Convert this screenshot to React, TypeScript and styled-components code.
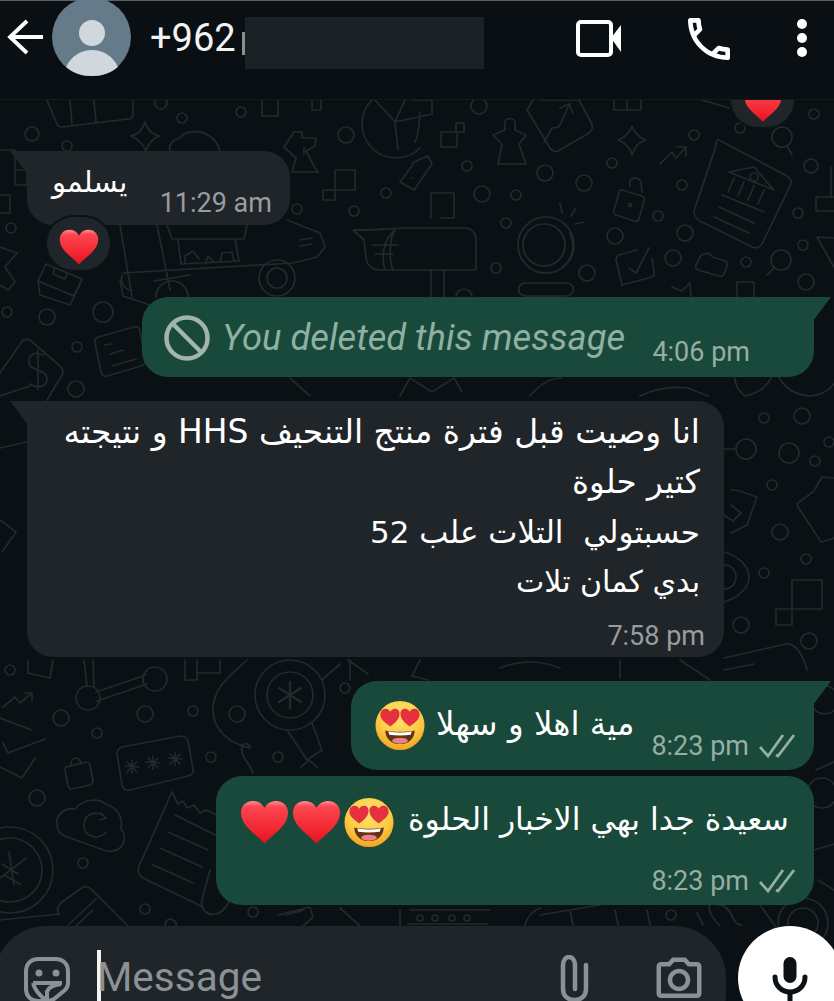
import React from "react";
import styled, { createGlobalStyle } from "styled-components";
import { MdOutlinePhotoCamera } from "react-icons/md";

const Global = createGlobalStyle`
html,body{margin:0;padding:0;background:#0a1013;}
#root{width:834px;height:1001px;overflow:hidden;}
`;

const Screen = styled.div`
position:relative;
width:834px;
height:1001px;
display:flex;
flex-direction:column;
overflow:hidden;
background:#0a1013;
font-family:Roboto,"Liberation Sans",sans-serif;
`;
const Header = styled.header`
position:relative;
z-index:2;
flex:0 0 100px;
box-sizing:border-box;
height:100px;
border-top:1px solid #5c6063;
border-bottom:1px solid #14191c;
background:#0a0f13;
display:flex;
align-items:flex-start;
padding-left:7px;
`;
const BackIcon = styled.svg`
width:37px;
height:36px;
margin-top:18px;
color:#fff;
flex:none;
`;
const Avatar = styled.svg`
width:79px;
height:78px;
margin:-3px 0 0 8px;
flex:none;
`;
const Phone = styled.div`
margin:15px 0 0 19px;
width:86px;
font-size:38px;
line-height:44px;
color:#f2f4f4;
white-space:nowrap;
flex:none;
`;
const Sliver = styled.div`
width:3px;
height:23px;
margin:31px 0 0 6px;
background:#8b8f91;
flex:none;
`;
const Redacted = styled.div`
width:239px;
height:52px;
margin-top:16px;
background:#1b2226;
flex:none;
`;
const HeaderIcon = styled.svg<{ $w: number; $h: number; $ml: number; $mt: number }>`
width:${(p) => p.$w}px;
height:${(p) => p.$h}px;
margin:${(p) => p.$mt}px 0 0 ${(p) => p.$ml}px;
color:#fff;
flex:none;
`;
const Wallpaper = styled.svg`
position:absolute;
left:0;
top:100px;
width:834px;
height:901px;
`;
const Chat = styled.main`
position:relative;
z-index:1;
flex:1;
min-height:0;
display:flex;
flex-direction:column;
`;
const Reaction = styled.div<{ $top: number; $right?: boolean; $h: number }>`
position:relative;
z-index:1;
box-sizing:border-box;
width:63px;
height:${(p) => p.$h}px;
margin-top:${(p) => p.$top}px;
margin-left:${(p) => (p.$right ? "731px" : "47px")};
border-radius:27px;
background:#202529;
box-shadow:0 0 0 2px #0c1215;
display:flex;
justify-content:center;
align-items:flex-end;
padding-bottom:5px;
`;
const Bubble = styled.div<{ $mine?: boolean; $w: number; $h: number; $top: number; $tail?: boolean }>`
position:relative;
box-sizing:border-box;
width:${(p) => p.$w}px;
height:${(p) => p.$h}px;
margin-top:${(p) => p.$top}px;
margin-left:${(p) => (p.$mine ? `${814 - p.$w}px` : "27px")};
border-radius:${(p) => (p.$tail ? (p.$mine ? "26px 0 26px 26px" : "0 26px 26px 26px") : "26px")};
background:${(p) => (p.$mine ? "#18493a" : "#202529")};
${(p) =>
  p.$tail
    ? `&::before{content:"";position:absolute;top:0;${p.$mine ? "right:-17px" : "left:-17px"};width:18px;height:24px;background:inherit;clip-path:polygon(${
        p.$mine ? "0 0,100% 0,0 100%" : "0 0,100% 0,100% 100%"
      });}`
    : ""}
`;
const Row = styled.div<{ $pl: number; $pt: number; $gap: number }>`
display:flex;
align-items:center;
gap:${(p) => p.$gap}px;
padding:${(p) => p.$pt}px 0 0 ${(p) => p.$pl}px;
`;
const EmojiGroup = styled.div`
display:flex;
align-items:center;
gap:3px;
flex:none;
`;
const ArabicLine = styled.div<{ $size: number; $lift?: number }>`
direction:rtl;
white-space:pre;
color:#fff;
font-family:"DejaVu Sans","Noto Sans",sans-serif;
font-size:${(p) => p.$size}px;
line-height:50px;
margin-bottom:${(p) => p.$lift ?? 0}px;
`;
const Lines = styled.div`
padding:6px 24px 0 0;
display:flex;
flex-direction:column;
`;
const Time = styled.span<{ $mine?: boolean }>`
font-size:27px;
line-height:30px;
white-space:nowrap;
color:${(p) => (p.$mine ? "#96aea5" : "#989da0")};
`;
const Meta = styled.div<{ $right: number; $bottom: number }>`
position:absolute;
right:${(p) => p.$right}px;
bottom:${(p) => p.$bottom}px;
display:flex;
align-items:center;
gap:10px;
`;
const Deleted = styled.span`
font-size:36.300px;
line-height:42px;
font-style:italic;
color:#8fb0a3;
white-space:nowrap;
`;
const Composer = styled.footer`
position:relative;
z-index:1;
flex:0 0 75px;
height:75px;
display:flex;
overflow:hidden;
`;
const InputBox = styled.div`
width:732px;
height:120px;
border-radius:52px;
margin-left:-6px;
background:#202529;
display:flex;
align-items:flex-start;
padding-left:30px;
box-sizing:border-box;
flex:none;
`;
const Caret = styled.div`
width:4px;
height:60px;
margin:24px 0 0 27px;
background:#f4f4f4;
flex:none;
`;
const Placeholder = styled.div`
position:relative;
font-size:40.500px;
line-height:46px;
color:#8a9296;
margin:28px 0 0 -4px;
width:460px;
flex:none;
`;
const InputIcon = styled.svg<{ $w: number; $h: number; $ml: number; $mt: number }>`
width:${(p) => p.$w}px;
height:${(p) => p.$h}px;
flex:none;
margin:${(p) => p.$mt}px 0 0 ${(p) => p.$ml}px;
color:#8a9296;
`;
const CameraIcon = styled(MdOutlinePhotoCamera)`
width:54px;
height:54px;
flex:none;
margin:27px 0 0 60px;
color:#8a9296;
`;
const MicButton = styled.div`
width:104px;
height:104px;
flex:none;
margin-left:12px;
border-radius:50%;
background:#fff;
display:flex;
justify-content:center;
padding-top:30px;
box-sizing:border-box;
`;
const MicIcon = styled.svg`
width:36px;
height:46px;
color:#0b1114;
flex:none;
`;

function Heart({ w = 49, id }: { w?: number; id: string }) {
  return (
    <svg width={w} height={w * 0.9} viewBox="0 0 50 45" style={{ flex: "none" }}>
      <defs>
        <linearGradient id={id} x1="0" y1="0" x2="0" y2="1">
          <stop offset="0" stopColor="#ff8b90" />
          <stop offset="0.14" stopColor="#fb4650" />
          <stop offset="0.7" stopColor="#f2242f" />
          <stop offset="1" stopColor="#dc1422" />
        </linearGradient>
      </defs>
      <path d="M25 44.500C18 36 1 27 1 13 1 5 7 1 13 1c5 0 9 2 12 7 3-5 7-7 12-7 6 0 12 4 12 12 0 14-17 23-24 31.500z" fill={`url(#${id})`} />
    </svg>
  );
}

function HeartEyes({ id }: { id: string }) {
  return (
    <svg width="50" height="49" viewBox="0 0 50 50" style={{ flex: "none" }}>
      <defs>
        <radialGradient id={id} cx="50%" cy="30%" r="75%">
          <stop offset="0" stopColor="#ffe46f" />
          <stop offset="0.6" stopColor="#fdcb42" />
          <stop offset="1" stopColor="#f19a1c" />
        </radialGradient>
      </defs>
      <circle cx="25" cy="25" r="25" fill={`url(#${id})`} />
      <path d="M15 26C10 22 5 19 5 14c0-4 3-6 5.500-6 2 0 3.500 1 4.500 3 1-2 3-3 5-3 3 0 5 2.500 4.500 6-.5 5-5 9-9.500 12z" fill="#e4303f" />
      <path d="M35 26c-4.500-3-9-7-9.500-12-.5-3.500 1.500-6 4.500-6 2 0 4 1 5 3 1-2 2.500-3 4.500-3 2.500 0 5.500 2 5.500 6 0 5-5 8-10 12z" fill="#e4303f" />
      <path d="M10 30c9 2 21 2 30 0 0 8-6 14-15 14s-15-6-15-14z" fill="#5f3315" />
      <path d="M13 31c8 1.500 16 1.500 24 0l-1 3.500c-7 1-15 1-22 0z" fill="#fff" />
      <ellipse cx="25" cy="40.500" rx="8" ry="3" fill="#ee7f86" />
    </svg>
  );
}

function DoubleCheck({ color }: { color: string }) {
  return (
    <svg width="36" height="26" viewBox="0 0 36 26" style={{ flex: "none" }}>
      <path d="M1 14l8 9L24 2M17 22l2 1L35 2" fill="none" stroke={color} strokeWidth="2.800" />
    </svg>
  );
}

function NoSign() {
  return (
    <svg width="46" height="46" viewBox="0 0 46 46" style={{ flex: "none" }}>
      <circle cx="23" cy="23" r="20.500" fill="none" stroke="#a3b3ad" strokeWidth="4.500" />
      <path d="M9 9l28 28" stroke="#a3b3ad" strokeWidth="4.500" />
    </svg>
  );
}

const dots: [number, number, number][] = [
  [32, 134, 7], [182, 118, 5], [67, 146, 5], [241, 112, 5], [161, 103, 6], [346, 135, 8], [386, 193, 5], [297, 209, 5], [354, 211, 5],
  [11, 228, 5], [479, 106, 8], [467, 166, 5], [545, 173, 8], [584, 183, 8], [482, 194, 8], [516, 195, 5], [612, 163, 5], [682, 185, 5],
  [694, 135, 5], [740, 128, 5], [814, 114, 5], [811, 166, 7], [506, 223, 5], [496, 268, 5], [587, 273, 8], [615, 236, 8], [658, 216, 5],
  [685, 233, 8], [673, 258, 8], [746, 262, 5], [803, 245, 5], [798, 213, 5], [806, 282, 8], [464, 297, 8],
  [7, 312, 5], [47, 317, 8], [103, 312, 10], [77, 347, 5], [76, 389, 8],
  [764, 418, 5], [802, 416, 8], [829, 442, 5], [815, 461, 5], [789, 453, 10], [746, 449, 10], [772, 485, 5], [780, 532, 8], [806, 559, 5],
  [764, 573, 5], [741, 625, 8], [809, 641, 8],
  [10, 670, 5], [61, 718, 8], [97, 733, 5], [145, 714, 8], [193, 711, 5], [37, 798, 8], [211, 757, 5], [278, 757, 5], [83, 863, 5],
  [145, 909, 5], [253, 912, 5], [237, 714, 8], [345, 688, 5], [671, 915, 5], [822, 793, 15], [825, 700, 14],
  [420, 918, 3], [435, 918, 3], [452, 918, 3], [467, 918, 3],
];

function Doodles() {
  return (
    <Wallpaper viewBox="0 100 834 901" fill="none" stroke="#232a2d" strokeWidth="1.700" strokeLinecap="round" strokeLinejoin="round">
      {dots.map(([cx, cy, r]) => (
        <circle key={`${cx}-${cy}`} cx={cx} cy={cy} r={r} />
      ))}
      {/* top row */}
      <path d="M47 100l9 22c1 3 3 5 6 5l66-8c3 0 5-2 5-5v-14M70 100l2 24M94 100l2 22" />
      <path d="M145 122c2 8 7 12 14 14-7 3-11 8-13 15-3-7-7-12-15-15 8-2 12-7 14-14z" />
      <path d="M262 100v16h16v-16M312 100v10h9v-10" />
      <path d="M372 100a33 33 0 1 0 48 48M395 122l3 28M395 122l-20-22M395 122l37-8M405 100l-10 22" />
      <path d="M432 114v-14M414 100h18M420 112c-1 12-1 22-5 30" />
      <path d="M294 132h8v6l14 0-1 8-9 5 8 15 4 6-26 0 4-14-12-11zM304 148v6" />
      <path d="M170 151c-2-8 5-12 10-13 4-7 18-8 26-4 6 3 12 9 14 17" />
      <path d="M441 132h16v15h-16zM456 132v-9h8v9z" />
      <path d="M505 123c0-6 10-6 10 0v7l11 5-7 9 7 20h-28l4-20-9-9 12-5z" />
      <path d="M539 100h40M527 110l23 38c2 3 5 4 8 3l31-18c3-2 4-6 3-9l-13-24M533 100l-6 10M544 142l8-14 7-1 10-22M560 108l9-4 4 9" />
      <path d="M632 126c2 6 5 11 14 14-8 2-11 7-14 15-2-8-6-12-14-15 8-3 12-8 14-14z" />
      <path d="M660 164l12-12 4 6 10-11M677 147h9v9" />
      <path d="M614 100v10h27v-10M627 100v10M702 100l27 8" />
      <circle cx="782" cy="137" r="10" />
      <path d="M787 146l5 9" />
      {/* bank document */}
      <path d="M719 140l68 36c4 2 5 6 3 10l-27 56c-2 5-7 7-11 5l-52-26c-5-3-7-8-5-13l21-62c0-4 1-7 3-6z" />
      <path d="M729 172l25-5 20 23-45-18zM734 178l-6 14M744 182l-6 14M754 186l-6 14M764 190l-6 14M722 195l42 17M719 207l35 16M714 217l35 16" />
      <circle cx="754" cy="177" r="4" />
      <path d="M834 197h-18v14h18M831 167v30" />
      {/* left squares */}
      <path d="M0 150h15v20M15 170h12v15H15zM15 170v15M0 195h10v18H0" />
      <path d="M335 170h20v20h-20zM323 190h12v10h-12z" />
      <path d="M414 162l14-6 4 8-18 26-14-8 12-16zM412 178h1" />
      <path d="M0 247l17 6-12 14 10 15-7 8-8-5" />
      <path d="M46 264l36 15-8 17-36-15zM55 268l-2 6 12 5 2-6" />
      {/* food truck */}
      <path d="M120 225l12 72M157 225l13 65M123 273l170-10M167 225l5 14h72l3-14M178 240l3 24 58-3-4-22M185 264v-8l8-5 6 8M205 264l3-8 6 6M220 262l2-9 10-1 2 9M287 220l33 13 5 14-8 10-24 6M300 240l12-2M300 246l12-2" />
      <circle cx="277" cy="278" r="18" />
      <circle cx="277" cy="278" r="10" />
      <path d="M156 297a16 16 0 0 1 32 0M132 290c-8 0-12-8-10-15" />
      {/* mailbox */}
      <path d="M353 230c14 1 38-2 56-2h56c6 0 11 5 11 11v31H380c-8 0-13-5-14-12l-2-18zM385 270c-4-14-2-30 10-40M395 230c-6 8-6 30-2 40M431 218v-25h23v25h-14M431 270v30M444 270v30M372 245h26M375 254h18" />
      {/* coin */}
      <circle cx="546" cy="245" r="28" />
      <path d="M570 233c6 14 2 28-8 34M560 203l2 10M571 216l5-8M575 224l9-2" />
      <circle cx="544" cy="245" r="21" />
      {/* lock, check, folder, magnifier */}
      <path d="M622 190l20 6c2 1 3 3 2 5l-5 18c-1 2-3 3-5 2l-18-6c-2-1-3-3-2-5l5-17c0-2 2-4 3-3zM630 186c-3-8 8-11 11-4l1 10" />
      <circle cx="630" cy="205" r="1.500" />
      <path d="M637 250l-18 5c-2 1-3 3-3 5l6 25 30-8c2-1 3-3 2-5l-2-14M629 268l7 5 13-25" />
      <path d="M701 255l7-2 5 4 12 4c2 1 3 3 2 5l-3 8c-1 2-3 3-5 2l-21-6c-2-1-3-3-2-5z" />
      <circle cx="781" cy="260" r="10" />
      <path d="M774 268l-7 7M817 237l17 1M817 237l17 30" />
      <path d="M526 283h40c10 0 10 13 0 13h-40c-10 0-10-13 0-13zM737 297v-15h17v15M672 287l10 4 8-8 1 14" />
      {/* left of the green bubble */}
      <path d="M23 340c3-1 5-1 7 0l30 26c3 3 4 6 2 9l-15 25M23 340L0 373" />
      <path d="M44 355c-10-4-16 0-15 8 1 8 18 6 18 16 0 8-10 10-17 5M38 350l0 40" />
      <path d="M98 337l36-10c3-1 5 1 6 4l5 29c1 3-1 5-4 6l-34 10c-3 1-5-1-6-4l-6-29c-1-3 1-5 3-6zM105 345l6-1M110 354l13-4M112 366l24-7" />
      <path d="M38 280l2 15 30 10 12-25M120 280l3 16 36 12M190 275l-36 6" />
      <path d="M745 396c14-3 26-10 30-30M775 366c4 18 16 28 34 30 12 0 20-6 25-12M735 370c-2 12 2 20 10 26" />
      <path d="M310 396l-20-18M400 396l10-18 22 14 22-14 8 14M530 396c10-12 22-18 32-18M640 396c16-8 30-10 48-8l20 8M0 396l30-10M36 440l-36 8M0 520l16 12-14 20" />
      {/* gray bubble right side */}
      <path d="M731 490l5 0 21 7-10 28-16 8M736 449H724M731 505l10 8-8 8-9-6" />
      <path d="M834 478l-12-1-9 15-14 10c-2 1-2 3-1 5l23 35 13-4" />
      <path d="M724 552c14 4 25 14 25 25s-11 21-25 25M724 565c8 0 12 6 12 12s-4 12-12 12" />
      <path d="M792 580h30v29h-30zM776 609h16v16h-16z" />
      <path d="M724 658l62-14c10-2 18 14 21 26M724 670l30-6" />
      {/* cart etc. */}
      <path d="M28 660v13l22 5 3-18M84 660l3 26M93 660l1 26M96 692l50-17M97 701l50-17" />
      <circle cx="88" cy="698" r="12" />
      <circle cx="155" cy="679" r="12" />
      <path d="M3 707l12-10 5 6 12-10M24 693h8v8" />
      <path d="M0 718l32 12M3 743l5 10 37-14M0 767l22 11 13-20" />
      <path d="M66 767l20-5c2 0 3 1 4 3l3 16c0 2-1 3-3 4l-18 4c-2 0-3-1-4-3l-3-16c0-2 0-3 1-3zM71 766c-1-9 9-11 10-2" />
      <path d="M122 747l58-11c4 0 7 2 8 5l5 28c1 3-1 6-5 7l-58 14c-4 1-7-1-8-5l-5-31c0-3 2-6 5-7z" />
      <path d="M132 760v13M125 766l14 1M127 772l10-10M127 762l10 10M153 756v13M146 762l14 1M148 768l10-10M148 758l10 10M175 752v13M168 758l14 1M170 764l10-10M170 754l10 10" />
      {/* top of bubble 4 gap */}
      <path d="M185 660v20h12v-20M197 673h23v-13" />
      {/* magnifier + curve */}
      <circle cx="290" cy="695" r="35" />
      <circle cx="290" cy="695" r="23" />
      <path d="M290 682v26M279 688l22 14M279 702l22-14" strokeWidth="2.500" />
      <path d="M312 723l10 27-15 10-20-30M317 767l-8-7-8 7M322 680l18-16" />
      <path d="M247 660c-12 12-34 25-34 50 0 18 14 33 37 38 0-6-10-5-8-1-2 10 8 16 11 26" />
      <path d="M57 825c-2-10 8-18 18-16 8-10 24-12 32-4 10 2 16 12 14 24 6 6 4 20-8 22-4 1-8 0-12-2l-34-12c-6-2-10-6-10-12z" />
      <path d="M106 818c-6-8-22-6-22 7 0 12 14 16 22 7M101 813l5 5-6 2" />
      {/* receipt */}
      <path d="M172 792l-33 74c-2 5 0 10 4 12l60 29M172 792l6 12 5-3 4 7 7-3 6 8 6-3 11 5" />
      <path d="M175 815l40 20M168 832l40 18M160 848l42 19M153 865l40 18" />
      <path d="M210 870l-8 30c-2 10 6 16 14 14 6-1 10-6 14-14" />
      {/* coin */}
      <circle cx="10" cy="870" r="43" />
      <circle cx="10" cy="870" r="32" />
      <path d="M9 852l5 33M0 878l26-20M2 864l16 10M4 875l16 9" />
      <path d="M58 913c-1-4 0-8 4-11l18-13c4-3 8-3 11 0l38 38M68 925l28-26M76 926l17-16" />
      <path d="M278 915l32-8 3 10-10 9M286 915l18-5" />
      <path d="M165 926c0-6 4-8 8-6s4 6 2 6" />
      {/* between last bubble and input */}
      <path d="M0 920l60-6M570 910l3 15M615 910l3 15M647 910l3 15M697 913l6 12M540 915l60-10M400 910v16M490 910h-80M408 924h80M340 908l20 18M525 925c2-8 8-15 16-17" />
      <path d="M720 926c-10-10-14-20-8-24 6-2 18 6 22 18 2 4 5 5 8 5M718 905c4-2 12 4 14 12" />
      <circle cx="803" cy="923" r="25" />
      <circle cx="803" cy="923" r="15" />
      <path d="M760 905l18 25M814 850l20-6M818 880l16 10M816 770l18-8" />
      <path d="M348 660l20 14M350 660v20M420 660l-8 16 16 4M500 668c20-8 40-8 60 0M620 660v18M680 660l30 20" />
    </Wallpaper>
  );
}

export default function App() {
  return (
    <Screen>
      <Global />
      <Doodles />
      <Header>
        <BackIcon viewBox="0 0 37 36">
          <path d="M36 18H3M20 2L3 18l17 16" fill="none" stroke="currentColor" strokeWidth="3.800" />
        </BackIcon>
        <Avatar viewBox="0 0 79 78">
          <circle cx="39.500" cy="39" r="39.500" fill="#667b89" />
          <circle cx="40" cy="35" r="13" fill="#d0d8de" />
          <path d="M14 69c6-12 16-17 26-17s20 5 26 17c-7 6-16 9-26 9s-19-3-26-9z" fill="#d0d8de" />
        </Avatar>
        <Phone>+962</Phone>
        <Sliver />
        <Redacted />
        <HeaderIcon $w={46} $h={37} $ml={92} $mt={19} viewBox="0 0 46 37">
          <rect x="2" y="2" width="33" height="33" rx="3" fill="none" stroke="currentColor" strokeWidth="4" />
          <path d="M35 18L45 5v27z" fill="currentColor" />
        </HeaderIcon>
        <HeaderIcon $w={56} $h={56} $ml={59} $mt={10} viewBox="0 0 24 24">
          <path
            fill="currentColor"
            d="M6.540 5c.060.890.210 1.760.450 2.590l-1.200 1.200c-.410-1.200-.670-2.470-.760-3.790h1.510m9.860 12.020c.850.240 1.720.390 2.600.450v1.490c-1.320-.090-2.590-.350-3.800-.750l1.200-1.190M7.500 3H4c-.550 0-1 .450-1 1 0 9.390 7.610 17 17 17 .550 0 1-.450 1-1v-3.490c0-.550-.450-1-1-1-1.240 0-2.450-.200-3.570-.570-.100-.040-.210-.050-.310-.050-.260 0-.510.100-.710.290l-2.200 2.200c-2.830-1.450-5.150-3.760-6.590-6.590l2.200-2.200c.280-.280.360-.670.250-1.020C8.700 6.450 8.500 5.250 8.500 4c0-.550-.450-1-1-1z"
          />
        </HeaderIcon>
        <HeaderIcon $w={12} $h={40} $ml={59} $mt={17} viewBox="0 0 12 40">
          <circle cx="6" cy="6" r="5" fill="currentColor" />
          <circle cx="6" cy="20" r="5" fill="currentColor" />
          <circle cx="6" cy="34" r="5" fill="currentColor" />
        </HeaderIcon>
      </Header>
      <Chat>
        <Reaction $right $top={-37} $h={64}>
          <Heart w={38} id="h0" />
        </Reaction>
        <Bubble $w={263} $h={74} $top={24} $tail>
          <Row $pl={25} $pt={6} $gap={33}>
            <ArabicLine $size={29}>يسلمو</ArabicLine>
          </Row>
          <Meta $right={18} $bottom={7}>
            <Time>11:29 am</Time>
          </Meta>
        </Bubble>
        <Reaction $top={-8} $h={53}>
          <Heart w={40} id="h1" />
        </Reaction>
        <Bubble $mine $w={672} $h={80} $top={27} $tail>
          <Row $pl={22} $pt={18} $gap={12}>
            <NoSign />
            <Deleted>You deleted this message</Deleted>
          </Row>
          <Meta $right={64} $bottom={10}>
            <Time $mine>4:06 pm</Time>
          </Meta>
        </Bubble>
        <Bubble $w={697} $h={256} $top={24} $tail>
          <Lines>
            <ArabicLine $size={32.900}>انا وصيت قبل فترة منتج التنحيف HHS و نتيجته</ArabicLine>
            <ArabicLine $size={32.500}>كتير حلوة</ArabicLine>
            <ArabicLine $size={31}>{"حسبتولي  التلات علب 52"}</ArabicLine>
            <ArabicLine $size={30}>بدي كمان تلات</ArabicLine>
          </Lines>
          <Meta $right={19} $bottom={6}>
            <Time>7:58 pm</Time>
          </Meta>
        </Bubble>
        <Bubble $mine $w={463} $h={89} $top={24} $tail>
          <Row $pl={24} $pt={18} $gap={11}>
            <HeartEyes id="e1" />
            <ArabicLine $size={32.500} $lift={2}>مية اهلا و سهلا</ArabicLine>
          </Row>
          <Meta $right={19} $bottom={9}>
            <Time $mine>8:23 pm</Time>
            <DoubleCheck color="#96aea5" />
          </Meta>
        </Bubble>
        <Bubble $mine $w={598} $h={129} $top={6}>
          <Row $pl={24} $pt={18} $gap={14}>
            <EmojiGroup>
              <Heart id="h2" />
              <Heart id="h3" />
              <HeartEyes id="e2" />
            </EmojiGroup>
            <ArabicLine $size={31.500} $lift={6}>سعيدة جدا بهي الاخبار الحلوة</ArabicLine>
          </Row>
          <Meta $right={19} $bottom={9}>
            <Time $mine>8:23 pm</Time>
            <DoubleCheck color="#96aea5" />
          </Meta>
        </Bubble>
      </Chat>
      <Composer>
        <InputBox>
          <InputIcon $w={46} $h={46} $ml={0} $mt={31} viewBox="0 0 46 46">
            <path d="M14 2h18c7 0 12 5 12 12v12c0 3-1 5-3 7L30 42c-2 1-4 2-7 2h-9C7 44 2 39 2 32V14C2 7 7 2 14 2z" fill="none" stroke="currentColor" strokeWidth="4" />
            <circle cx="15" cy="16" r="3.500" fill="currentColor" />
            <circle cx="32" cy="16" r="3.500" fill="currentColor" />
            <path d="M9 26h29M9 26c2 8 7 13 14 18M23 44V33M37 27c-6 1-13 3-14 8" fill="none" stroke="currentColor" strokeWidth="4" />
          </InputIcon>
          <Caret />
          <Placeholder>Message</Placeholder>
          <InputIcon $w={32} $h={47} $ml={3} $mt={29} viewBox="0 0 32 47">
            <path d="M26 10V34C26 41 21 45 14.500 45S3 41 3 34V10C3 5 6 2 9 2S15 5 15 10V34" fill="none" stroke="currentColor" strokeWidth="4.500" strokeLinecap="round" />
          </InputIcon>
          <CameraIcon />
        </InputBox>
        <MicButton>
          <MicIcon viewBox="0 0 36 46">
            <rect x="11.500" y="1" width="13" height="26" rx="6.500" fill="currentColor" />
            <path d="M3 21c0 9 7 15 15 15s15-6 15-15" fill="none" stroke="currentColor" strokeWidth="5" strokeLinecap="round" />
            <path d="M18 35v11" stroke="currentColor" strokeWidth="5" />
          </MicIcon>
        </MicButton>
      </Composer>
    </Screen>
  );
}
